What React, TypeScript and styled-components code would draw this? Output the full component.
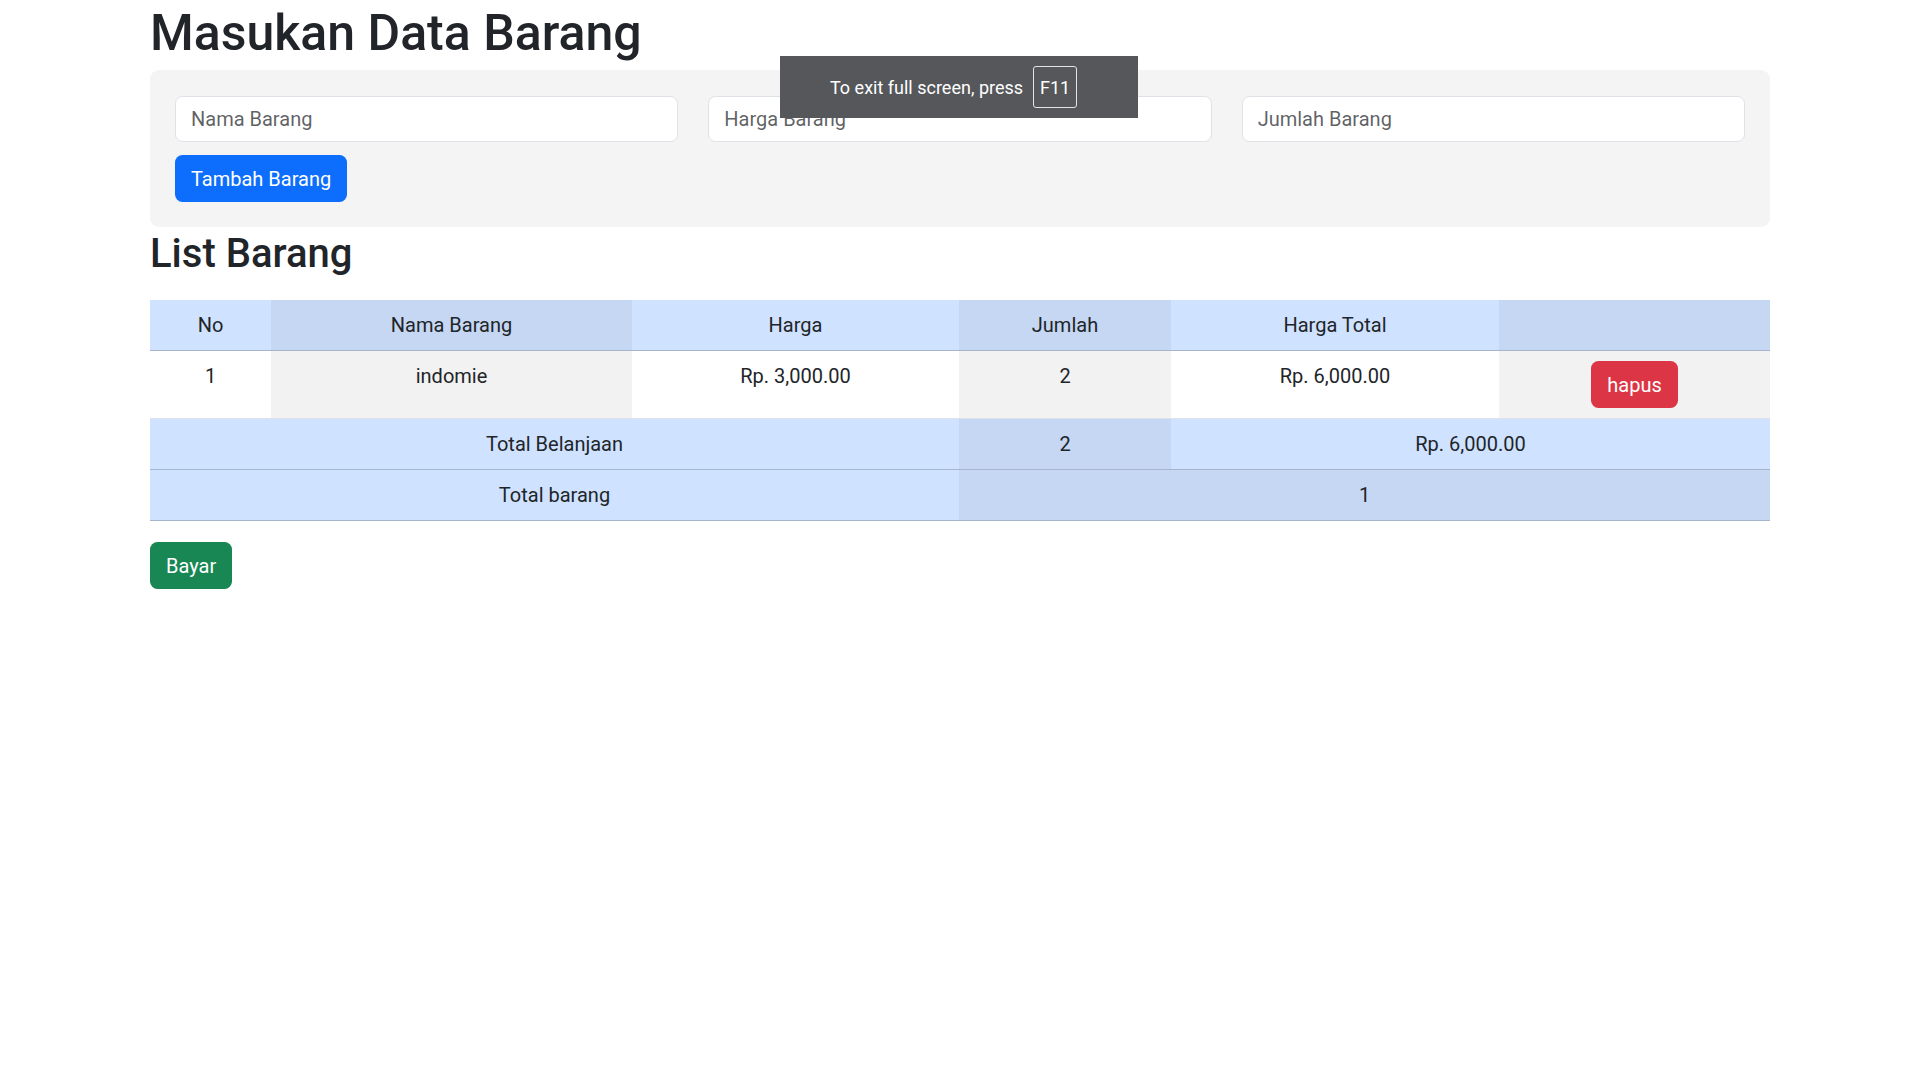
import React, { useState } from 'react';
import styled, { createGlobalStyle } from 'styled-components';

const GlobalStyle = createGlobalStyle`
  *, *::before, *::after { box-sizing: border-box; }
  body {
    margin: 0;
    font-family: Roboto, "Liberation Sans", sans-serif;
    font-size: 20px;
    line-height: 1.5;
    color: #212529;
    background: #fff;
  }
`;

interface Barang {
  nama: string;
  harga: number;
  jumlah: number;
}

const rupiah = (n: number) =>
  'Rp. ' + n.toLocaleString('en-US', { minimumFractionDigits: 2, maximumFractionDigits: 2 });

const Container = styled.div`
  max-width: 1650px;
  margin: 0 auto;
  padding: 0 15px;
`;

const Title = styled.h1`
  margin: 0 0 7px;
  padding-top: 3px;
  font-size: 50px;
  font-weight: 500;
  line-height: 60px;
`;

const SubTitle = styled.h2`
  margin: 3px 0 22px;
  font-size: 40px;
  font-weight: 500;
  line-height: 48px;
`;

const Panel = styled.div`
  background: #f4f4f4;
  border-radius: 9px;
  padding: 26px 25px 25px;
`;

const InputRow = styled.div`
  display: grid;
  grid-template-columns: repeat(3, 1fr);
  gap: 30px;
`;

const Input = styled.input`
  height: 46px;
  width: 100%;
  padding: 0 15px;
  border: 1px solid #dee2e6;
  border-radius: 7.5px;
  background: #fff;
  font-family: inherit;
  font-size: 20px;
  color: #212529;
  outline: none;
  &::placeholder {
    color: rgba(33, 37, 41, 0.72);
  }
`;

const Button = styled.button<{ $variant: 'primary' | 'danger' | 'success' }>`
  height: 47px;
  padding: 0 15px;
  border: 1px solid transparent;
  border-radius: 7.5px;
  font-family: inherit;
  font-size: 20px;
  line-height: 30px;
  color: #fff;
  cursor: pointer;
  background: ${(p) =>
    p.$variant === 'primary' ? '#0d6efd' : p.$variant === 'danger' ? '#dc3545' : '#198754'};
`;

const AddButton = styled(Button)`
  margin-top: 13px;
`;

const Table = styled.table`
  width: 100%;
  table-layout: fixed;
  border-collapse: collapse;
  margin-bottom: 21px;
  text-align: center;
  vertical-align: top;
  & th,
  & td {
    padding: 10px;
    font-weight: 400;
    vertical-align: top;
  }
`;

const Head = styled.thead`
  & th {
    background: #cfe2ff;
    border-bottom: 1px solid #a6b5cc;
  }
  & th:nth-child(even) {
    background: #c5d7f2;
  }
`;

const Body = styled.tbody`
  & td {
    background: #fff;
    border-bottom: 1px solid #dee2e6;
  }
  & td:nth-child(even) {
    background: #f2f2f2;
  }
`;

const Foot = styled.tfoot`
  & td {
    background: #cfe2ff;
    border-bottom: 1px solid #a6b5cc;
  }
  & td:nth-child(even) {
    background: #c5d7f2;
  }
`;

/* browser's fullscreen hint, drawn over the page */
const Toast = styled.div`
  position: fixed;
  top: 56px;
  left: 780px;
  width: 358px;
  height: 62px;
  display: flex;
  align-items: center;
  gap: 10px;
  padding-left: 50px;
  background: #55575b;
  color: #fff;
  font-size: 18px;
`;

const Key = styled.span`
  width: 44px;
  height: 42px;
  display: flex;
  align-items: center;
  justify-content: center;
  border: 1px solid #e4e4e4;
  border-radius: 3px;
`;

const widths = [121, 361, 327, 212, 328, 271];

export default function App() {
  const [items, setItems] = useState<Barang[]>([{ nama: 'indomie', harga: 3000, jumlah: 2 }]);

  const totalJumlah = items.reduce((s, b) => s + b.jumlah, 0);
  const totalHarga = items.reduce((s, b) => s + b.harga * b.jumlah, 0);

  return (
    <>
      <GlobalStyle />
      <Container>
        <Title>Masukan Data Barang</Title>
        <Panel>
          <InputRow>
            <Input placeholder="Nama Barang" />
            <Input placeholder="Harga Barang" />
            <Input placeholder="Jumlah Barang" />
          </InputRow>
          <AddButton $variant="primary">Tambah Barang</AddButton>
        </Panel>

        <SubTitle>List Barang</SubTitle>
        <Table>
          <colgroup>
            {widths.map((w, i) => (
              <col key={i} style={{ width: w }} />
            ))}
          </colgroup>
          <Head>
            <tr>
              <th>No</th>
              <th>Nama Barang</th>
              <th>Harga</th>
              <th>Jumlah</th>
              <th>Harga Total</th>
              <th></th>
            </tr>
          </Head>
          <Body>
            {items.map((b, i) => (
              <tr key={i}>
                <td>{i + 1}</td>
                <td>{b.nama}</td>
                <td>{rupiah(b.harga)}</td>
                <td>{b.jumlah}</td>
                <td>{rupiah(b.harga * b.jumlah)}</td>
                <td>
                  <Button $variant="danger" onClick={() => setItems(items.filter((_, j) => j !== i))}>
                    hapus
                  </Button>
                </td>
              </tr>
            ))}
          </Body>
          <Foot>
            <tr>
              <td colSpan={3}>Total Belanjaan</td>
              <td>{totalJumlah}</td>
              <td colSpan={2}>{rupiah(totalHarga)}</td>
            </tr>
            <tr>
              <td colSpan={3}>Total barang</td>
              <td colSpan={3}>{items.length}</td>
            </tr>
          </Foot>
        </Table>
        <Button $variant="success">Bayar</Button>
      </Container>

      <Toast>
        <span>To exit full screen, press</span>
        <Key>F11</Key>
      </Toast>
    </>
  );
}
